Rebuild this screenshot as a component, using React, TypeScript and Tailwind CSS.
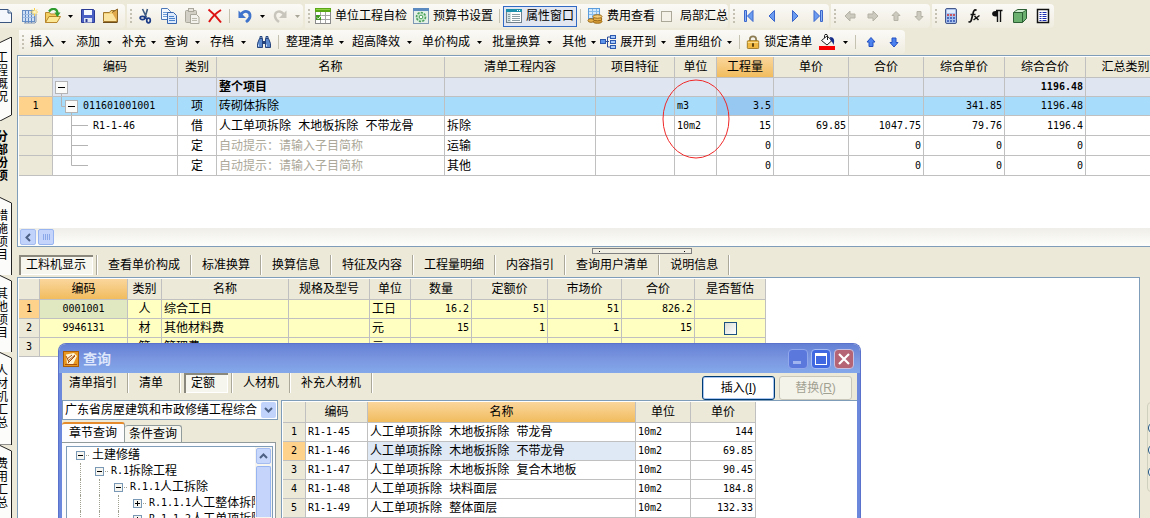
import React, { useState } from 'react';
import clsx from 'clsx';

type Align = 'left' | 'center' | 'right';

interface Column {
  title: string;
  width: string;
  align: Align;
  active?: boolean;
}

const alignClass: Record<Align, string> = {
  left: 'text-left pl-0.5',
  center: 'text-center',
  right: 'text-right pr-0.5',
};

/* ---------- icons ---------- */

interface SvgProps {
  children: React.ReactNode;
  size?: number;
}

function Svg({ children, size = 16 }: SvgProps) {
  return (
    <svg width={size} height={size} viewBox="0 0 16 16" className="shrink-0" aria-hidden="true">
      {children}
    </svg>
  );
}

const icons = {
  doc: (
    <Svg>
      <path d="M-3 1.500H8L11.500 5v9.500H-3z" fill="#f4f8fd" stroke="#3a5680" />
      <path d="M8 1.500V5h3.500" fill="#c6d6ea" stroke="#3a5680" />
    </Svg>
  ),
  newGrid: (
    <Svg>
      <rect x="0.500" y="2.500" width="12" height="11" fill="#cfe0f5" stroke="#6a8fc2" />
      <path d="M3.500 3v12M6.500 3v12M9.500 3v12" stroke="#5e8ac8" />
      <path d="M1 6.500h11M1 9.500h11" stroke="#9db9de" />
      <path d="M2 15h11l1-1V6" fill="none" stroke="#7c93b4" />
      <path d="M12.500 0v8M8.500 4h8M10 1.500l5 5M15 1.500l-5 5" stroke="#f7d04a" />
      <circle cx="12.500" cy="4" r="1.500" fill="#fff6c0" />
    </Svg>
  ),
  open: (
    <Svg>
      <path d="M0.500 14.500V4.500h4l1 1.500h6v3" fill="#f3cf62" stroke="#b8862c" />
      <path d="M0.500 14.500L4 8.500h11.500l-3.500 6z" fill="#fce794" stroke="#b8862c" />
      <path d="M4 3.500C7 -0.500 12 0 12.500 5" fill="none" stroke="#2f9c2f" strokeWidth="2.200" />
      <path d="M9.500 4.500h6L12.500 9z" fill="#2f9c2f" />
    </Svg>
  ),
  save: (
    <Svg>
      <path d="M1.500 1.500h12l1 1v12h-13z" fill="#4a5fc4" stroke="#2b3a94" />
      <rect x="4" y="2" width="8" height="5" fill="#f6f8ff" />
      <rect x="4" y="10" width="8" height="4.500" fill="#dfe4f4" />
      <rect x="5.500" y="11" width="2" height="3" fill="#2b3a94" />
    </Svg>
  ),
  folder: (
    <Svg>
      <path d="M0.500 13.500V4.500h6l1.500-2h6v11z" fill="#f4d078" stroke="#a3792e" />
      <path d="M1 6h12v7H1z" fill="#fbe3a0" />
      <path d="M9 4.500L14.500 1v13" fill="#e0a94c" stroke="#8a6424" />
      <path d="M0 14.500h14.500" stroke="#6b4c1a" />
    </Svg>
  ),
  cut: (
    <Svg>
      <path d="M4.500 1l4 8.500M9.500 1L7 9.500" stroke="#3d5a80" strokeWidth="1.600" />
      <ellipse cx="4.500" cy="10" rx="2.400" ry="1.600" fill="none" stroke="#1c3c88" strokeWidth="1.700" />
      <ellipse cx="10.500" cy="12.500" rx="1.800" ry="2.300" fill="none" stroke="#1c3c88" strokeWidth="1.700" />
      <path d="M6.500 9.500L9.500 11" stroke="#1c3c88" strokeWidth="1.500" />
    </Svg>
  ),
  copy: (
    <Svg>
      <path d="M0.500 0.500h6l3 3v8h-9z" fill="#f2f7fe" stroke="#4d78b8" />
      <path d="M2 4.500h5M2 6.500h5M2 8.500h4" stroke="#6c9bd8" />
      <path d="M6.500 4.500h6l3 3v8h-9z" fill="#dceafc" stroke="#3766ae" />
      <path d="M8 8.500h5M8 10.500h6M8 12.500h6" stroke="#4b82cc" />
    </Svg>
  ),
  paste: (
    <Svg>
      <rect x="1.500" y="2.500" width="11" height="12" rx="1" fill="#d2d0c6" stroke="#aaa89c" />
      <rect x="4.500" y="0.500" width="5" height="3" fill="#e6e4dc" stroke="#aaa89c" />
      <path d="M6.500 6.500h6l2.500 2.500v6.500H6.500z" fill="#f3f2ec" stroke="#aaa89c" />
      <path d="M8 10.500h5M8 12.500h5" stroke="#bdbbb0" />
    </Svg>
  ),
  remove: (
    <Svg>
      <path d="M1.500 1.500C6 5 10 9 14 14.500M14 2C9 5 5 9 2 14" fill="none" stroke="#dc1414" strokeWidth="2" />
    </Svg>
  ),
  undo: (
    <Svg>
      <path d="M4 6.500C7.500 1.500 13.500 3 13 8.500c-.3 2.500-2 4-4 5.500" fill="none" stroke="#3f73cc" strokeWidth="2.800" />
      <path d="M1.500 2.500v7.500h7.500z" fill="#3f73cc" />
    </Svg>
  ),
  redo: (
    <Svg>
      <path d="M12 6.500C8.500 1.500 2.500 3 3 8.500c.3 2.500 2 4 4 5.500" fill="none" stroke="#c8c6bc" strokeWidth="2.400" />
      <path d="M14.500 2.500v7.500H7z" fill="#c8c6bc" />
    </Svg>
  ),
  check: (
    <Svg>
      <rect x="0.500" y="0.500" width="15" height="15" fill="#fff" stroke="#8a8a8a" />
      <path d="M0 0h16v4H0z" fill="#5aa818" />
      <path d="M1 1h14v1H1z" fill="#8fd044" />
      <path d="M1 7.500h14M1 11.500h14M5.500 4v11M10.500 4v11" stroke="#a4a4a4" />
      <rect x="1" y="7" width="5" height="5" fill="#3e9a1e" />
      <path d="M2 9.500l1.500 1.500L6 7.500" fill="none" stroke="#fff" />
    </Svg>
  ),
  budget: (
    <Svg>
      <rect x="0.500" y="0.500" width="15" height="15" fill="#e4f0e8" stroke="#7c98b4" />
      <path d="M0 0h16v3H0z" fill="#5a8ac0" />
      <circle cx="8" cy="9" r="4.500" fill="#c8e8cc" stroke="#4ca05c" strokeWidth="1.600" strokeDasharray="2.200 1.200" />
      <circle cx="8" cy="9" r="1.800" fill="#fff" stroke="#4ca05c" />
    </Svg>
  ),
  props: (
    <Svg>
      <rect x="0.500" y="1.500" width="15" height="13" fill="#fff" stroke="#70808c" />
      <path d="M0 1h16v3H0z" fill="#1c90ac" />
      <path d="M11 2.500h1M13 2.500h1" stroke="#fff" />
      <rect x="1" y="4" width="4" height="10" fill="#d4e4e4" />
      <path d="M2 6.500h2M2 8.500h2M2 10.500h2M2 12.500h2M6 6.500h8M6 8.500h8M6 10.500h8M6 12.500h8" stroke="#8a9ca4" />
    </Svg>
  ),
  cost: (
    <Svg>
      <rect x="1.500" y="0.500" width="11" height="10" fill="#d4eafc" stroke="#5a9cdc" />
      <path d="M2 3.500h10M2 6.500h10M5.500 1v9M9.500 1v9" stroke="#86bcec" />
      <path d="M6 8.500h9v5.500H6z" fill="#dca848" />
      <ellipse cx="10.500" cy="13.500" rx="4.500" ry="1.800" fill="#d49a34" stroke="#9c6a18" />
      <ellipse cx="10.500" cy="11" rx="4.500" ry="1.800" fill="#e8b450" stroke="#9c6a18" />
      <ellipse cx="10.500" cy="8.500" rx="4.500" ry="1.800" fill="#f4cc78" stroke="#9c6a18" />
      <ellipse cx="4" cy="12.500" rx="3" ry="1.800" fill="#e8b450" stroke="#9c6a18" />
    </Svg>
  ),
  first: (
    <Svg>
      <path d="M3.500 2.500h2v11h-2z" fill="#8cb4f4" stroke="#3a66cc" />
      <path d="M12 2.500v11L6.500 8z" fill="#6c9cf0" stroke="#3a66cc" />
    </Svg>
  ),
  prev: (
    <Svg>
      <path d="M10.500 2.500v11L5 8z" fill="#6c9cf0" stroke="#3a66cc" />
    </Svg>
  ),
  next: (
    <Svg>
      <path d="M5.500 2.500v11L11 8z" fill="#6c9cf0" stroke="#3a66cc" />
    </Svg>
  ),
  last: (
    <Svg>
      <path d="M4 2.500v11L9.500 8z" fill="#6c9cf0" stroke="#3a66cc" />
      <path d="M10.500 2.500h2v11h-2z" fill="#8cb4f4" stroke="#3a66cc" />
    </Svg>
  ),
  grayLeft: (
    <Svg>
      <path d="M3 8l5-5v3h5v4H8v3z" fill="#ccc9be" stroke="#b5b2a6" />
    </Svg>
  ),
  grayRight: (
    <Svg>
      <path d="M13 8L8 3v3H3v4h5v3z" fill="#ccc9be" stroke="#b5b2a6" />
    </Svg>
  ),
  grayUp: (
    <Svg>
      <path d="M8 3.500l4 4h-2v5H6v-5H4z" fill="#ccc9be" stroke="#b5b2a6" />
    </Svg>
  ),
  grayDown: (
    <Svg>
      <path d="M8 12.500l4-4h-2v-5H6v5H4z" fill="#ccc9be" stroke="#b5b2a6" />
    </Svg>
  ),
  blueUp: (
    <Svg>
      <path d="M8 3.500l4 4.500h-2v4.500H6V8H4z" fill="#4c82f0" stroke="#2450c0" />
    </Svg>
  ),
  blueDown: (
    <Svg>
      <path d="M8 13l4-4.500h-2V4H6v4.500H4z" fill="#4c82f0" stroke="#2450c0" />
    </Svg>
  ),
  calc: (
    <Svg>
      <rect x="2.500" y="0.500" width="11" height="15" rx="1.500" fill="#a8c0ec" stroke="#44588c" />
      <rect x="4" y="2" width="8" height="3" fill="#e0ecfc" />
      <path d="M4 7h2M7 7h2M10 7h2" stroke="#d03030" strokeWidth="1.500" />
      <path d="M4 10h2M7 10h2M10 10h2M4 13h2M7 13h2M10 13h2" stroke="#2c50b0" strokeWidth="1.500" />
    </Svg>
  ),
  fx: (
    <Svg>
      <path d="M10.500 2.500C8.500 1 7.500 3 7 5.500l-1.500 6C5 14 3.500 14.500 2.500 13.500M4.500 6.500h5" fill="none" stroke="#111" strokeWidth="1.700" />
      <path d="M8.500 8l4 4M13.500 7.500L7.500 12" stroke="#111" strokeWidth="1.500" />
    </Svg>
  ),
  para: (
    <Svg>
      <path d="M13 3H6.500C2 3 2 8.500 6.500 8.500H8V3z" fill="#111" />
      <path d="M8.500 3v11M11.500 3v11M7 2.500h6.500" stroke="#111" strokeWidth="1.400" />
    </Svg>
  ),
  cube: (
    <Svg>
      <path d="M1.500 4.500l4-3h9v9l-4 4h-9z" fill="#6cb070" stroke="#2c6034" />
      <path d="M1.500 4.500h9v10M10.500 4.500l4-3" fill="none" stroke="#2c6034" />
      <path d="M2.500 4l3.500-2h7.500l-3 2z" fill="#d0ecd0" />
    </Svg>
  ),
  list: (
    <Svg>
      <rect x="2.500" y="1.500" width="11" height="13" fill="#fff" stroke="#111" strokeWidth="1.500" />
      <path d="M4.500 4.500h2M4.500 6.500h2M4.500 8.500h2M4.500 10.500h2M4.500 12.500h2M7.500 4.500h4M7.500 6.500h4M7.500 8.500h4M7.500 10.500h4M7.500 12.500h4" stroke="#1c2cb0" />
    </Svg>
  ),
  find: (
    <Svg>
      <path d="M3.500 4.500h3v9h-5v-4zM9.500 4.500h3l2 5v4h-5z" fill="#5c88cc" stroke="#27457c" />
      <path d="M4 2.500h2v2H4zM10 2.500h2v2h-2z" fill="#a4c0e8" stroke="#27457c" />
      <path d="M6.500 7h3v3h-3z" fill="#27457c" />
      <path d="M2.500 10.500v2M10.500 10.500v2" stroke="#d0e0f8" />
    </Svg>
  ),
  expand: (
    <Svg>
      <path d="M5 7.500h4M7.500 3v10M7.500 3H10M7.500 13H10" fill="none" stroke="#2c4c98" />
      <rect x="0.500" y="5.500" width="5" height="4" fill="#5c94ec" stroke="#2c58b0" />
      <rect x="10.500" y="1.500" width="5" height="3" fill="#a4c8fc" stroke="#2c58b0" />
      <rect x="10.500" y="6.500" width="5" height="3" fill="#a4c8fc" stroke="#2c58b0" />
      <rect x="10.500" y="11.500" width="5" height="3" fill="#a4c8fc" stroke="#2c58b0" />
    </Svg>
  ),
  lock: (
    <Svg size={14}>
      <path d="M4.500 7V4.500c0-4 7-4 7 0V7" fill="none" stroke="#8c7c54" strokeWidth="2" />
      <rect x="1.500" y="6.500" width="13" height="9" rx="1" fill="#f0b840" stroke="#98701c" />
      <path d="M2 8.500h12" stroke="#fce49c" />
      <path d="M8 9.500v4" stroke="#4c3408" strokeWidth="2" />
    </Svg>
  ),
  fill: (
    <Svg>
      <path d="M2.500 6.500L8 2l5 4.500L8 11z" fill="#fff" stroke="#222" />
      <path d="M8.500 6V1.500C8.500 0 5.500 0 5.500 1.500V4" fill="none" stroke="#222" />
      <path d="M11 3c4 0 5 3 3.500 8-.8-2.500-1.500-3.500-3-4.500z" fill="#142c88" />
      <rect x="0" y="12" width="16" height="4" fill="#f80000" />
    </Svg>
  ),
};

/* ---------- toolbar parts ---------- */

type IconName = keyof typeof icons;

function Grip() {
  return (
    <span className="flex w-[7px] shrink-0 flex-col items-center gap-0.5">
      <i className="size-0.5 bg-[#c4c1b2]" />
      <i className="size-0.5 bg-[#c4c1b2]" />
      <i className="size-0.5 bg-[#c4c1b2]" />
      <i className="size-0.5 bg-[#c4c1b2]" />
    </span>
  );
}

function Sep() {
  return (
    <span className="flex w-[7px] shrink-0 justify-center">
      <i className="h-3.5 w-px bg-[#c5c2b2]" />
    </span>
  );
}

function Caret({ muted, wide }: { muted?: boolean; wide?: boolean }) {
  return (
    <span className={clsx('flex shrink-0 justify-center', wide ? 'w-[18px]' : 'w-[14px]')}>
      <svg width="5" height="3" viewBox="0 0 5 3" aria-hidden="true">
        <path d="M0 0h5L2.500 3z" fill={muted ? '#a8a598' : '#000'} />
      </svg>
    </span>
  );
}

function IconButton({ icon, label }: { icon: IconName; label: string }) {
  return (
    <button type="button" aria-label={label} className="flex h-full w-[23px] shrink-0 items-center justify-center">
      {icons[icon]}
    </button>
  );
}

function DropButton({ label, muted }: { label: string; muted?: boolean }) {
  return (
    <button type="button" aria-label={label} className="flex h-full w-3 shrink-0 items-center justify-center">
      <Caret muted={muted} />
    </button>
  );
}

function TextButton({ icon, children, active }: { icon: IconName; children: string; active?: boolean }) {
  return (
    <button
      type="button"
      className={clsx(
        'flex h-[21px] shrink-0 items-center gap-1 whitespace-nowrap px-[3px]',
        active && 'bg-[#e1e6f0] outline-1 -outline-offset-1 outline-[#316ac5]'
      )}
    >
      {icons[icon]}
      {children}
    </button>
  );
}

function MenuButton({ children, tight }: { children: string; tight?: boolean }) {
  return (
    <button type="button" className="flex h-full shrink-0 items-center whitespace-nowrap pl-1">
      {children}
      <Caret wide={!tight} />
    </button>
  );
}

function ToolGroup({ children }: { children: React.ReactNode }) {
  return (
    <div className="flex h-6 shrink-0 items-center rounded-r-sm bg-linear-to-b from-[#fbfaf7] to-[#efecdf]">
      {children}
    </div>
  );
}

function TopToolbar({ partial, onPartial }: { partial: boolean; onPartial: (v: boolean) => void }) {
  return (
    <div className="flex h-[29px] shrink-0 gap-0.5 overflow-hidden pt-1">
      <ToolGroup>
        <button type="button" aria-label="新建" className="flex h-full w-[18px] items-center">
          {icons.doc}
        </button>
        <IconButton icon="newGrid" label="新建表" />
        <IconButton icon="open" label="打开" />
        <DropButton label="打开选项" />
        <IconButton icon="save" label="保存" />
        <IconButton icon="folder" label="目录" />
        <span className="w-[3px]" />
      </ToolGroup>
      <ToolGroup>
        <Grip />
        <IconButton icon="cut" label="剪切" />
        <IconButton icon="copy" label="复制" />
        <IconButton icon="paste" label="粘贴" />
        <IconButton icon="remove" label="删除" />
        <Sep />
        <IconButton icon="undo" label="撤销" />
        <DropButton label="撤销选项" />
        <IconButton icon="redo" label="恢复" />
        <DropButton label="恢复选项" muted />
      </ToolGroup>
      <ToolGroup>
        <Grip />
        <TextButton icon="check">单位工程自检</TextButton>
        <TextButton icon="budget">预算书设置</TextButton>
        <Sep />
        <TextButton icon="props" active>
          属性窗口
        </TextButton>
        <Sep />
        <TextButton icon="cost">费用查看</TextButton>
        <label className="flex shrink-0 items-center gap-2 whitespace-nowrap pl-[3px]">
          <input
            type="checkbox"
            checked={partial}
            onChange={(e) => onPartial(e.target.checked)}
            className="size-[11px] appearance-none border border-[#aca899] bg-[#f4f2e8] checked:bg-[#316ac5]"
          />
          局部汇总
        </label>
      </ToolGroup>
      <ToolGroup>
        <Grip />
        <IconButton icon="first" label="首条" />
        <IconButton icon="prev" label="上一条" />
        <IconButton icon="next" label="下一条" />
        <IconButton icon="last" label="末条" />
      </ToolGroup>
      <ToolGroup>
        <Grip />
        <IconButton icon="grayLeft" label="升级" />
        <IconButton icon="grayRight" label="降级" />
        <IconButton icon="grayUp" label="上移" />
        <IconButton icon="grayDown" label="下移" />
      </ToolGroup>
      <ToolGroup>
        <Grip />
        <IconButton icon="calc" label="计算器" />
        <IconButton icon="fx" label="函数" />
        <IconButton icon="para" label="段落" />
        <IconButton icon="cube" label="图元" />
        <IconButton icon="list" label="列表" />
      </ToolGroup>
    </div>
  );
}

function EditToolbar() {
  return (
    <div className="flex h-[26px] shrink-0 overflow-hidden pt-px pl-0.5">
      <ToolGroup>
        <Grip />
        <MenuButton>插入</MenuButton>
        <MenuButton>添加</MenuButton>
        <MenuButton tight>补充</MenuButton>
        <MenuButton>查询</MenuButton>
        <MenuButton>存档</MenuButton>
        <IconButton icon="find" label="查找" />
        <Sep />
        <MenuButton tight>整理清单</MenuButton>
        <MenuButton>超高降效</MenuButton>
        <MenuButton>单价构成</MenuButton>
        <MenuButton>批量换算</MenuButton>
        <MenuButton tight>其他</MenuButton>
        {icons.expand}
        <MenuButton tight>展开到</MenuButton>
        <MenuButton tight>重用组价</MenuButton>
        <Sep />
        <TextButton icon="lock">锁定清单</TextButton>
        <IconButton icon="fill" label="填充颜色" />
        <Caret />
        <Sep />
        <IconButton icon="blueUp" label="上移一行" />
        <IconButton icon="blueDown" label="下移一行" />
      </ToolGroup>
    </div>
  );
}

/* ---------- side tabs ---------- */

const sideTabs = [
  { name: '工程概况', box: 'h-[84px] pt-[15px]', edge: 'M-1 6L11.500 0V78L-1 84.500z' },
  { name: '分部份项', box: 'h-[76px] pt-[10px] font-bold', edge: '' },
  { name: '措施项目', box: 'h-[78px] pt-[13px]', edge: 'M-1 0L11.500 6V90H-1z' },
  { name: '其他项目', box: 'h-[77px] pt-[13px]', edge: 'M-1 0L11.500 6V90H-1z' },
  { name: '人材机汇总', box: 'h-[93px] pt-[13px]', edge: 'M-1 0L11.500 6V93H-1z' },
  { name: '费用汇总', box: 'h-[93px] pt-[13px]', edge: 'M-1 0L11.500 6V93H-1z' },
];

function SideTabs() {
  return (
    <nav className="w-[17px] shrink-0 overflow-hidden pt-2">
      {sideTabs.map((tab) => (
        <button key={tab.name} type="button" className={clsx('relative flex w-[13px] items-start justify-end pr-[5px]', tab.box)}>
          {tab.edge && (
            <svg className="absolute inset-0 size-full" aria-hidden="true">
              <path d={tab.edge} fill="#fcfcfa" stroke="#222" />
            </svg>
          )}
          <span className="relative w-3 shrink-0 break-all leading-[13px]">{tab.name}</span>
        </button>
      ))}
    </nav>
  );
}

/* ---------- grids ---------- */

function GridHead({ columns }: { columns: Column[] }) {
  return (
    <>
      <colgroup>
        {columns.map((c, i) => (
          <col key={i} className={c.width} />
        ))}
      </colgroup>
      <thead>
        <tr className="h-[21px]">
          {columns.map((c, i) => (
            <th
              key={i}
              className={clsx(
                'border-r border-b border-[#c0c0c0] font-normal whitespace-nowrap',
                c.active ? 'bg-linear-to-b from-[#fad69c] to-[#f1bc5c]' : 'bg-[#ece9d8]'
              )}
            >
              {c.title}
            </th>
          ))}
        </tr>
      </thead>
    </>
  );
}

const isLatin = (text: string) => /^[\x20-\x7e]+$/.test(text);

interface CellProps {
  text?: string;
  align: Align;
  className?: string;
  children?: React.ReactNode;
}

function Cell({ text = '', align, className, children }: CellProps) {
  return (
    <td
      className={clsx(
        'overflow-hidden border-r border-b border-[#c0c0c0] whitespace-nowrap leading-4',
        alignClass[align],
        isLatin(text) && 'text-[10px]',
        className
      )}
    >
      {children ?? text}
    </td>
  );
}

const mainColumns: Column[] = [
  { title: '', width: 'w-[34px]', align: 'center' },
  { title: '编码', width: 'w-[125px]', align: 'left' },
  { title: '类别', width: 'w-[39px]', align: 'center' },
  { title: '名称', width: 'w-[228px]', align: 'left' },
  { title: '清单工程内容', width: 'w-[151px]', align: 'left' },
  { title: '项目特征', width: 'w-[79px]', align: 'left' },
  { title: '单位', width: 'w-[42px]', align: 'left' },
  { title: '工程量', width: 'w-[57px]', align: 'right', active: true },
  { title: '单价', width: 'w-[75px]', align: 'right' },
  { title: '合价', width: 'w-[75px]', align: 'right' },
  { title: '综合单价', width: 'w-[81px]', align: 'right' },
  { title: '综合合价', width: 'w-[81px]', align: 'right' },
  { title: '汇总类别', width: 'w-[80px]', align: 'left' },
];

type TreeKind = 'root' | 'item' | 'child' | 'lastChild';

interface MainRow {
  kind: TreeKind;
  hint?: boolean;
  cells: string[];
}

const mainRows: MainRow[] = [
  { kind: 'root', cells: ['', '', '', '整个项目', '', '', '', '', '', '', '', '1196.48', ''] },
  { kind: 'item', cells: ['1', '011601001001', '项', '砖砌体拆除', '', '', 'm3', '3.5', '', '', '341.85', '1196.48', ''] },
  { kind: 'child', cells: ['', 'R1-1-46', '借', '人工单项拆除 木地板拆除 不带龙骨', '拆除', '', '10m2', '15', '69.85', '1047.75', '79.76', '1196.4', ''] },
  { kind: 'child', hint: true, cells: ['', '', '定', '自动提示：请输入子目简称', '运输', '', '', '0', '', '0', '0', '0', ''] },
  { kind: 'lastChild', hint: true, cells: ['', '', '定', '自动提示：请输入子目简称', '其他', '', '', '0', '', '0', '0', '0', ''] },
];

function TreeMark({ kind }: { kind: TreeKind }) {
  const line = { stroke: '#b4b4b4', fill: 'none' };
  if (kind === 'root') {
    return (
      <svg width="28" height="18" className="block" aria-hidden="true">
        <path d="M8.500 15v3" {...line} />
        <rect x="2.500" y="3.500" width="12" height="12" fill="#fafaf8" stroke="#b4b4b4" />
        <path d="M5 9.500h7" stroke="#000" />
      </svg>
    );
  }
  if (kind === 'item') {
    return (
      <svg width="28" height="18" className="block" aria-hidden="true">
        <path d="M8.500 0v9.500H12M18.500 15v3" {...line} />
        <rect x="12.500" y="3.500" width="12" height="12" fill="#fafaf8" stroke="#b4b4b4" />
        <path d="M15 9.500h7" stroke="#000" />
      </svg>
    );
  }
  return (
    <svg width="38" height="19" className="block" aria-hidden="true">
      <path d={kind === 'child' ? 'M18.500 0v19M18.500 9.500H35' : 'M18.500 0v9.500H35'} {...line} />
    </svg>
  );
}

function MainGrid() {
  return (
    <table className="w-[1147px] table-fixed border-separate border-spacing-0">
      <GridHead columns={mainColumns} />
      <tbody>
        {mainRows.map((row, r) => {
          const root = row.kind === 'root';
          const item = row.kind === 'item';
          return (
            <tr key={r} className={root || item ? 'h-[19px]' : 'h-5'}>
              {row.cells.map((text, c) => (
                <Cell
                  key={c}
                  text={text}
                  align={mainColumns[c].align}
                  className={clsx(
                    c === 0 && (item ? 'bg-[#ffd28c]' : 'bg-[#ece9d8]'),
                    c > 0 && root && 'bg-[#dfe6f1] font-bold',
                    c > 0 && item && (c === 7 ? 'bg-[#96c8f1]' : 'bg-[#a8dcfb]'),
                    c === 1 && 'pl-0!',
                    c === 3 && row.hint && 'text-[#aca899]'
                  )}
                >
                  {c === 1 ? (
                    <span className="flex items-center gap-0.5">
                      <TreeMark kind={row.kind} />
                      {text}
                    </span>
                  ) : undefined}
                </Cell>
              ))}
            </tr>
          );
        })}
      </tbody>
    </table>
  );
}

const resourceColumns: Column[] = [
  { title: '', width: 'w-[21px]', align: 'center' },
  { title: '编码', width: 'w-[88px]', align: 'center', active: true },
  { title: '类别', width: 'w-[34px]', align: 'center' },
  { title: '名称', width: 'w-[127px]', align: 'left' },
  { title: '规格及型号', width: 'w-[81px]', align: 'left' },
  { title: '单位', width: 'w-[41px]', align: 'left' },
  { title: '数量', width: 'w-[61px]', align: 'right' },
  { title: '定额价', width: 'w-[76px]', align: 'right' },
  { title: '市场价', width: 'w-[74px]', align: 'right' },
  { title: '合价', width: 'w-[73px]', align: 'right' },
  { title: '是否暂估', width: 'w-[71px]', align: 'center' },
];

const resourceRows = [
  ['1', '0001001', '人', '综合工日', '', '工日', '16.2', '51', '51', '826.2', ''],
  ['2', '9946131', '材', '其他材料费', '', '元', '15', '1', '1', '15', ''],
  ['3', '', '管', '管理费', '', '元', '', '', '', '', ''],
];

function ResourceGrid() {
  const [estimated, setEstimated] = useState(false);

  return (
    <table className="w-[747px] table-fixed border-separate border-spacing-0">
      <GridHead columns={resourceColumns} />
      <tbody>
        {resourceRows.map((row, r) => (
          <tr key={r} className="h-[19px]">
            {row.map((text, c) => (
              <Cell
                key={c}
                text={text}
                align={resourceColumns[c].align}
                className={clsx(
                  c === 0 && (r === 0 ? 'bg-[#ffd28c]' : 'bg-[#ece9d8]'),
                  c === 1 && r === 0 && 'bg-[#e0e8c2]',
                  c > 0 && !(c === 1 && r === 0) && 'bg-[#ffffc2]'
                )}
              >
                {c === 10 && r === 1 ? (
                  <input
                    type="checkbox"
                    aria-label="是否暂估"
                    checked={estimated}
                    onChange={(e) => setEstimated(e.target.checked)}
                    className="mx-auto block size-[13px] appearance-none border border-[#1c5180] bg-linear-to-br from-[#dcdcd7] to-white checked:bg-[#21a121]"
                  />
                ) : undefined}
              </Cell>
            ))}
          </tr>
        ))}
      </tbody>
    </table>
  );
}

/* ---------- query dialog ---------- */

const quotaColumns: Column[] = [
  { title: '', width: 'w-[23px]', align: 'center' },
  { title: '编码', width: 'w-[62px]', align: 'left' },
  { title: '名称', width: 'w-[268px]', align: 'left', active: true },
  { title: '单位', width: 'w-[55px]', align: 'left' },
  { title: '单价', width: 'w-[65px]', align: 'right' },
];

const quotaRows = [
  ['1', 'R1-1-45', '人工单项拆除 木地板拆除 带龙骨', '10m2', '144'],
  ['2', 'R1-1-46', '人工单项拆除 木地板拆除 不带龙骨', '10m2', '69.85'],
  ['3', 'R1-1-47', '人工单项拆除 木地板拆除 复合木地板', '10m2', '90.45'],
  ['4', 'R1-1-48', '人工单项拆除 块料面层', '10m2', '184.8'],
  ['5', 'R1-1-49', '人工单项拆除 整体面层', '10m2', '132.33'],
];

const chapters = [
  { code: '', name: '土建修缮', indent: 'pl-[9px]', open: true },
  { code: 'R.1', name: '拆除工程', indent: 'pl-[28px]', open: true },
  { code: 'R.1.1', name: '人工拆除', indent: 'pl-[47px]', open: true },
  { code: 'R.1.1.1', name: '人工整体拆除', indent: 'pl-[66px]', open: false },
  { code: 'R.1.1.2', name: '人工单项拆除', indent: 'pl-[66px]', open: false },
];

function ChapterTree() {
  return (
    <ul className="min-w-0 flex-1 overflow-hidden">
      {chapters.map((c, i) => (
        <li key={i} className={clsx('relative flex h-4 items-center whitespace-nowrap', c.indent)}>
          {/* dotted guides run down from every open parent */}
          {chapters.slice(0, Math.min(i, 3)).map((_, g) => (
            <i
              key={g}
              className="absolute top-0 h-4 border-l border-dotted border-[#a0a090]"
              style={{ left: 13 + g * 19 }}
            />
          ))}
          <svg width="16" height="9" className="relative shrink-0" aria-hidden="true">
            <rect x="0.500" y="0.500" width="8" height="8" fill="#f6f5f0" stroke="#7898b5" />
            <path d={c.open ? 'M2 4.500h5' : 'M2 4.500h5M4.500 2v5'} stroke="#000" />
            <path d="M10 4.500h4" stroke="#a0a090" strokeDasharray="1 1" />
          </svg>
          {c.code && <span className="text-[10px]">{c.code}</span>}
          {c.name}
        </li>
      ))}
    </ul>
  );
}

function ToolTabs({ tabs, active }: { tabs: string[]; active: string }) {
  return (
    <div className="flex h-5 shrink-0 gap-px">
      {tabs.map((tab) => (
        <button
          key={tab}
          type="button"
          className="flex min-w-[51px] items-stretch border-r border-[#aca899] px-[3px] whitespace-nowrap shadow-[1px_0_0_#fff] first:pl-0"
        >
          <span
            className={clsx(
              'flex flex-1 items-center px-[7px]',
              tab === active && 'bg-[#f6f5ee] shadow-[inset_2px_2px_0_#8a887c,inset_-1px_-1px_0_#fff]'
            )}
          >
            {tab}
          </span>
        </button>
      ))}
    </div>
  );
}

function QueryDialog() {
  const [library, setLibrary] = useState('gd');

  return (
    <section className="absolute top-[343px] bottom-0 left-[58px] flex w-[803px] flex-col overflow-hidden rounded-t-lg border border-b-0 border-[#5a72cc] bg-[#ece9d8]">
      <header className="flex h-[29px] shrink-0 items-center gap-1 bg-linear-to-b from-[#6480d4] via-[#7a96e0] to-[#84a8ea] pr-1.5 pl-1">
        <svg width="16" height="16" viewBox="0 0 16 16" className="shrink-0" aria-hidden="true">
          <rect x="0.500" y="0.500" width="15" height="15" fill="#e89820" stroke="#a85c08" />
          <path d="M3 3.500l8-1.500 3 3-4 8.500-6-1z" fill="#fff4d4" />
          <path d="M4 8l5-4M5 10l7-6M5 12l7-7M3 5l3 6M2 13.500h12" stroke="#a85010" />
        </svg>
        <h2 className="flex-1 text-sm font-bold text-[#dde6fa]">查询</h2>
        <div className="flex gap-[3px]">
          <button type="button" aria-label="最小化" className="flex size-5 items-end rounded-sm border border-[#92a8ec] bg-[#5b78dc] p-1">
            <i className="h-[3px] w-2 bg-[#a0b4f0]" />
          </button>
          <button type="button" aria-label="最大化" className="flex size-5 items-center justify-center rounded-sm border border-[#a8bcf4] bg-[#4068e0]">
            <i className="size-3 border border-t-[3px] border-white" />
          </button>
          <button type="button" aria-label="关闭" className="flex size-5 items-center justify-center rounded-sm border border-[#c8c0e0] bg-[#b46474]">
            <svg width="12" height="12" viewBox="0 0 12 12" aria-hidden="true">
              <path d="M1 1l10 10M11 1L1 11" stroke="#fff" strokeWidth="2.200" />
            </svg>
          </button>
        </div>
      </header>

      <div className="flex min-h-0 flex-1 flex-col border-x-[3px] border-[#6c88dc]">
        <div className="flex h-[27px] shrink-0 items-start justify-between pr-[5px]">
          <ToolTabs tabs={['清单指引', '清单', '定额', '人材机', '补充人材机']} active="定额" />
          <div className="flex gap-1 pt-[3px]">
            <button type="button" className="h-6 w-[73px] rounded-[3px] border border-[#003c74] bg-white shadow-[inset_0_0_0_1px_#a8c4f0]">
              插入<span className="font-['Liberation_Sans']">(<u>I</u>)</span>
            </button>
            <button type="button" disabled className="h-6 w-[73px] rounded-[3px] border border-[#c9c7ba] bg-[#f4f3ea] text-[#a1a192]">
              替换<span className="font-['Liberation_Sans']">(<u>R</u>)</span>
            </button>
          </div>
        </div>

        <div className="flex min-h-0 flex-1 gap-[3px]">
          <div className="flex w-[216px] shrink-0 flex-col">
            <div className="relative h-5 shrink-0">
              <select
                aria-label="定额库"
                value={library}
                onChange={(e) => setLibrary(e.target.value)}
                className="h-5 w-full appearance-none border border-[#7f9db9] bg-white pl-0.5 pr-[18px]"
              >
                <option value="gd">广东省房屋建筑和市政修缮工程综合</option>
              </select>
              <span className="pointer-events-none absolute top-0.5 right-0.5 flex h-4 w-[15px] items-center justify-center rounded-xs bg-[#c1d3fb]">
                <svg width="9" height="6" viewBox="0 0 9 6" aria-hidden="true">
                  <path d="M1 1l3.500 3.500L8 1" fill="none" stroke="#4d6185" strokeWidth="2" />
                </svg>
              </span>
            </div>
            <div className="flex h-[22px] shrink-0 items-end">
              <button type="button" className="h-5 rounded-t-[3px] border-t-2 border-r border-t-[#e68b2c] border-r-[#919b9c] bg-[#fcfcfe] px-[7px] leading-4">
                章节查询
              </button>
              <button type="button" className="h-[17px] rounded-t-[3px] border-t border-r border-[#919b9c] bg-[#f6f5ee] px-1 leading-4">
                条件查询
              </button>
            </div>
            <div className="mr-0.5 flex min-h-0 flex-1 border-t border-r border-[#919b9c] bg-[#fcfcfe] pt-[3px] pr-0.5 pl-1">
              <div className="flex min-w-0 flex-1 border border-b-0 border-[#7f9db9] bg-white">
                <ChapterTree />
                <div className="flex w-[17px] shrink-0 flex-col gap-0.5 bg-[#f6f5f0] p-px">
                  <span className="flex h-4 items-center justify-center rounded-xs border border-[#a4bcf0] bg-[#c8d8fc]">
                    <svg width="9" height="6" viewBox="0 0 9 6" aria-hidden="true">
                      <path d="M1 5l3.500-3.500L8 5" fill="none" stroke="#4d6185" strokeWidth="2" />
                    </svg>
                  </span>
                  <span className="flex-1 rounded-t-xs border border-b-0 border-[#98b4f0] bg-[#c4d4fa]" />
                </div>
              </div>
            </div>
          </div>

          <div className="min-w-0 flex-1 overflow-hidden border-t border-l border-[#7f9db9] bg-white pt-px pl-px">
            <table className="w-[473px] table-fixed border-separate border-spacing-0">
              <GridHead columns={quotaColumns} />
              <tbody>
                {quotaRows.map((row, r) => (
                  <tr key={r} className="h-[19px]">
                    {row.map((text, c) => (
                      <Cell
                        key={c}
                        text={text}
                        align={quotaColumns[c].align}
                        className={clsx(
                          c === 0 && (r === 1 ? 'bg-[#ffd28c]' : 'bg-[#ece9d8]'),
                          c === 2 && r === 1 && 'bg-[#dfe9f6]'
                        )}
                      />
                    ))}
                  </tr>
                ))}
              </tbody>
            </table>
          </div>
        </div>
      </div>
    </section>
  );
}

/* ---------- page ---------- */

const detailTabs = [
  '工料机显示',
  '查看单价构成',
  '标准换算',
  '换算信息',
  '特征及内容',
  '工程量明细',
  '内容指引',
  '查询用户清单',
  '说明信息',
];

export default function App() {
  const [partial, setPartial] = useState(false);

  return (
    <div className="relative flex h-screen flex-col overflow-hidden bg-[#ece9d8] font-['DejaVu_Sans_Mono','Noto_Sans_CJK_SC',sans-serif] text-xs leading-4 text-black">
      <TopToolbar partial={partial} onPartial={setPartial} />

      <div className="flex min-h-0 flex-1">
        <SideTabs />

        <main className="flex min-w-0 flex-1 flex-col">
          <EditToolbar />

          <div className="relative flex h-[192px] shrink-0 flex-col overflow-hidden border-y border-l border-[#7f9db9] bg-white pt-px pl-px">
            <MainGrid />
            {/* red mark around the unit cells */}
            <svg width="70" height="82" className="pointer-events-none absolute top-[22px] left-[643px]" aria-hidden="true">
              <ellipse cx="35" cy="41" rx="33" ry="39" fill="none" stroke="#f02828" />
            </svg>
            <div className="mt-auto flex h-[18px] gap-0.5 bg-linear-to-b from-[#efeee8] to-[#fefefc] p-px">
              <button type="button" aria-label="向左滚动" className="flex h-4 w-4 items-center justify-center rounded-xs border border-[#a4bcf0] bg-[#c1d3fb]">
                <svg width="6" height="9" viewBox="0 0 6 9" aria-hidden="true">
                  <path d="M5 1L1.500 4.500L5 8" fill="none" stroke="#4d6185" strokeWidth="2" />
                </svg>
              </button>
              <span className="flex h-4 w-4 items-center justify-center gap-px rounded-xs border border-[#98b4f0] bg-[#c4d4fa]">
                <i className="h-1.5 w-px bg-[#8ca8e8]" />
                <i className="h-1.5 w-px bg-[#8ca8e8]" />
                <i className="h-1.5 w-px bg-[#8ca8e8]" />
                <i className="h-1.5 w-px bg-[#8ca8e8]" />
              </span>
            </div>
          </div>

          <div className="relative h-[30px] shrink-0 pt-2 pl-0.5">
            <ToolTabs tabs={detailTabs} active="工料机显示" />
            <div className="absolute top-px left-[575px] flex h-1.5 w-[100px] items-center justify-between border border-[#808080] bg-[#f0eee2] px-1.5">
              <i className="size-px bg-black" />
              <i className="size-px bg-black" />
            </div>
          </div>

          <div className="flex min-h-0 flex-1">
            <div className="min-w-0 flex-1 overflow-hidden border-t border-x border-[#7f9db9] bg-white pt-px pl-px">
              <ResourceGrid />
            </div>
            <div className="w-2.5 shrink-0 overflow-hidden pt-[125px] pl-[7px]">
              <fieldset className="flex h-[90px] w-20 flex-col justify-center gap-2.5 rounded border border-[#d0d0bf] pt-1.5">
                <input type="radio" name="side" aria-label="选项一" className="size-3 appearance-none rounded-full border border-[#1c5180] bg-white" />
                <input type="radio" name="side" aria-label="选项二" className="size-3 appearance-none rounded-full border border-[#1c5180] bg-white" />
                <input type="radio" name="side" aria-label="选项三" className="size-3 appearance-none rounded-full border border-[#1c5180] bg-white" />
              </fieldset>
            </div>
          </div>
        </main>
      </div>

      <QueryDialog />
    </div>
  );
}
